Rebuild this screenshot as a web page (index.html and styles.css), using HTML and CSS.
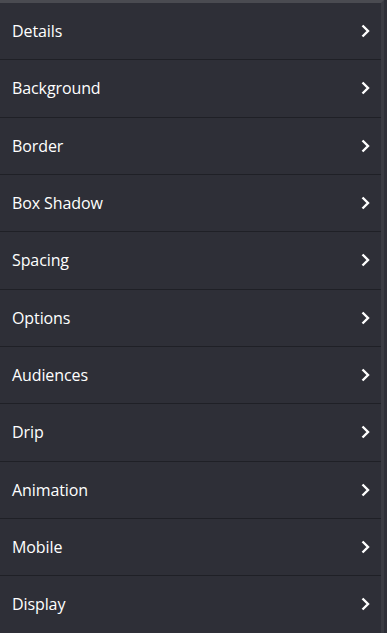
FILE: index.html
```html
<!DOCTYPE html>
<html lang="en">
<head>
    <meta charset="UTF-8">
    <meta name="viewport" content="width=device-width, initial-scale=1.0">
    <title>Settings</title>
    <link rel="stylesheet" href="styles.css">
</head>
<body>
    <div class="panel">
        <ul class="menu-list">
            <li><span>Details</span><svg class="chev" viewBox="0 0 11 14"><path d="M2.5 1.5 L8 7 L2.5 12.5"/></svg></li>
            <li><span>Background</span><svg class="chev" viewBox="0 0 11 14"><path d="M2.5 1.5 L8 7 L2.5 12.5"/></svg></li>
            <li><span>Border</span><svg class="chev" viewBox="0 0 11 14"><path d="M2.5 1.5 L8 7 L2.5 12.5"/></svg></li>
            <li><span>Box Shadow</span><svg class="chev" viewBox="0 0 11 14"><path d="M2.5 1.5 L8 7 L2.5 12.5"/></svg></li>
            <li><span>Spacing</span><svg class="chev" viewBox="0 0 11 14"><path d="M2.5 1.5 L8 7 L2.5 12.5"/></svg></li>
            <li><span>Options</span><svg class="chev" viewBox="0 0 11 14"><path d="M2.5 1.5 L8 7 L2.5 12.5"/></svg></li>
            <li><span>Audiences</span><svg class="chev" viewBox="0 0 11 14"><path d="M2.5 1.5 L8 7 L2.5 12.5"/></svg></li>
            <li><span>Drip</span><svg class="chev" viewBox="0 0 11 14"><path d="M2.5 1.5 L8 7 L2.5 12.5"/></svg></li>
            <li><span>Animation</span><svg class="chev" viewBox="0 0 11 14"><path d="M2.5 1.5 L8 7 L2.5 12.5"/></svg></li>
            <li><span>Mobile</span><svg class="chev" viewBox="0 0 11 14"><path d="M2.5 1.5 L8 7 L2.5 12.5"/></svg></li>
            <li><span>Display</span><svg class="chev" viewBox="0 0 11 14"><path d="M2.5 1.5 L8 7 L2.5 12.5"/></svg></li>
        </ul>
    </div>
</body>
</html>
```

FILE: styles.css
```css
body {
    margin: 0;
    padding: 0;
    background-color: #2e2f37;
    font-family: 'Open Sans', 'Noto Sans', sans-serif;
}

.panel {
    width: 384px;
    height: 633px;
    border-top: 3.7px solid #4a4b51;
    border-right: 3px solid #3a3b42;
    background-color: #2e2f37;
    box-sizing: border-box;
    overflow: hidden;
}

.menu-list {
    list-style: none;
    margin: 0;
    padding: 0;
}

.menu-list li {
    display: flex;
    align-items: center;
    justify-content: space-between;
    height: 56.33px;
    padding: 0 10px 0 12px;
    border-bottom: 1px solid #1f2026;
    color: #ffffff;
    font-size: 16px;
    letter-spacing: -0.1px;
    cursor: pointer;
}

.chev {
    width: 11px;
    height: 14px;
    fill: none;
    stroke: #ffffff;
    stroke-width: 2.4;
}
```
